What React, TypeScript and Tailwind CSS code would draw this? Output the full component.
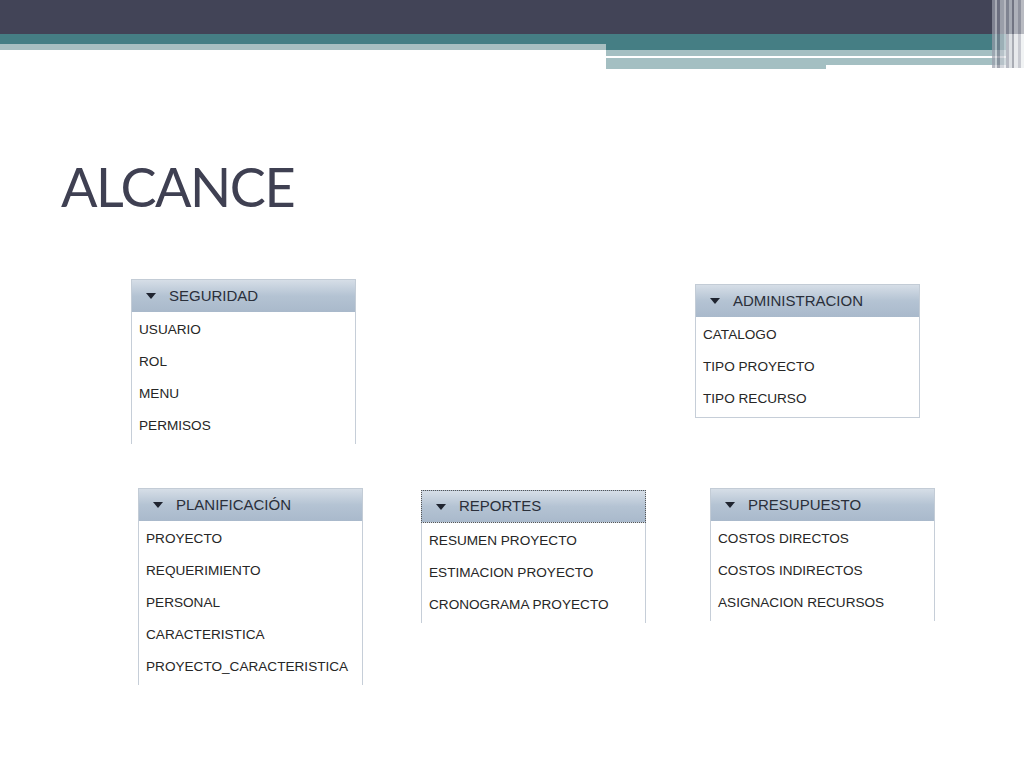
type PanelProps = {
  title: string;
  items: string[];
  focused?: boolean;
  bottom?: boolean;
  className?: string;
};

function Panel({ title, items, focused, bottom, className }: PanelProps) {
  return (
    <div className={`w-[225px] ${className ?? ""}`}>
      <div
        className={`flex h-[33px] items-center bg-gradient-to-b from-[#d6dee7] via-[#b4c3d3] to-[#a9b9cb] pl-[14px] ${
          focused ? "border border-dotted border-[#555]" : "border-x border-t border-[#c3ccd6]"
        }`}
      >
        <svg width="10" height="6" viewBox="0 0 10 6" className="mr-[13px]">
          <polygon points="0,0 10,0 5,6" fill="#1f2430" />
        </svg>
        <span className="text-[15px] text-[#2a2f3a]">{title}</span>
      </div>
      <div
        className={`border-x border-[#c6ced8] bg-white pt-[2px] pb-[2px] ${
          bottom ? "border-b" : ""
        }`}
      >
        {items.map((item) => (
          <div key={item} className="flex h-8 items-center pl-[7px] text-[13.6px] text-[#262626]">
            {item}
          </div>
        ))}
      </div>
    </div>
  );
}

export default function App() {
  return (
    <div
      className="relative h-[768px] w-[1024px] overflow-hidden bg-white"
      style={{ fontFamily: '"Liberation Sans", Arial, sans-serif' }}
    >
      {/* top bands */}
      <div className="relative h-[70px]">
        <div className="h-[34px] bg-[#424457]" />
        <div className="flex">
          <div className="w-[606px]">
            <div className="h-[10px] bg-[#457e84]" />
            <div className="h-[6px] bg-[#a8bfc1]" />
          </div>
          <div className="w-[400px]">
            <div className="h-[16px] bg-[#457e84]" />
            <div className="h-[6px] bg-[#a4bfc2]" />
            <div className="h-[2px] w-[343px] bg-white" />
            <div className="h-[7px] bg-[#a4bfc2]" />
            <div className="h-[4px] w-[220px] bg-[#a4bfc2]" />
          </div>
        </div>
        <div className="absolute right-0 top-0 flex h-[68px] w-[32px] opacity-70">
          <div className="w-[3px] bg-[#9a9daa]" />
          <div className="w-[2px] bg-[#d3d6dc]" />
          <div className="w-[3px] bg-[#7d8190]" />
          <div className="w-[4px] bg-[#c0c4cc]" />
          <div className="w-[2px] bg-[#e6e8ec]" />
          <div className="w-[3px] bg-[#9a9eaa]" />
          <div className="w-[3px] bg-[#d0d4da]" />
          <div className="w-[2px] bg-[#858995]" />
          <div className="w-[4px] bg-[#dde0e4]" />
          <div className="w-[3px] bg-[#b1b5be]" />
          <div className="w-[3px] bg-[#eceef0]" />
        </div>
      </div>

      <h1
        className="ml-[61px] mt-[81px] text-[54px] leading-[72px] tracking-[-1.5px] text-[#3f4052]"
        style={{ fontFamily: 'Lato, "Open Sans", sans-serif' }}
      >
        ALCANCE
      </h1>

      <div className="mt-[56px] flex items-start">
        <Panel
          className="ml-[131px]"
          title="SEGURIDAD"
          items={["USUARIO", "ROL", "MENU", "PERMISOS"]}
        />
        <Panel
          className="ml-[339px] mt-[5px] w-[224px]"
          title="ADMINISTRACION"
          items={["CATALOGO", "TIPO PROYECTO", "TIPO RECURSO"]}
          bottom
        />
      </div>

      <div className="mt-[44px] flex items-start">
        <Panel
          className="ml-[138px] w-[224px]"
          title="PLANIFICACIÓN"
          items={["PROYECTO", "REQUERIMIENTO", "PERSONAL", "CARACTERISTICA", "PROYECTO_CARACTERISTICA"]}
        />
        <Panel
          className="ml-[58px] mt-[2px]"
          title="REPORTES"
          items={["RESUMEN PROYECTO", "ESTIMACION PROYECTO", "CRONOGRAMA PROYECTO"]}
          focused
        />
        <Panel
          className="ml-[64px] w-[224px]"
          title="PRESUPUESTO"
          items={["COSTOS DIRECTOS", "COSTOS INDIRECTOS", "ASIGNACION RECURSOS"]}
        />
      </div>
    </div>
  );
}
